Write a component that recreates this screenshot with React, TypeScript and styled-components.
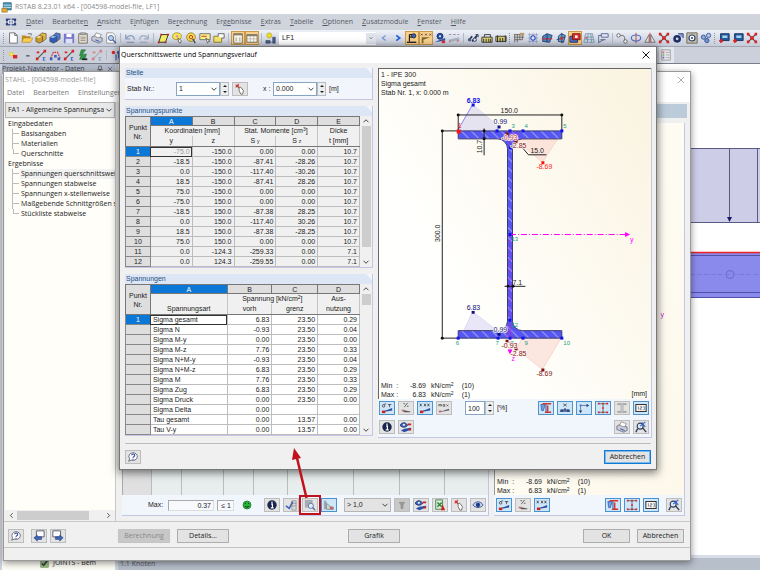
import React from "react";
import styled, { createGlobalStyle, css } from "styled-components";

const sans = `"Liberation Sans", Arial, sans-serif`;
const ui = `"Open Sans", "Noto Sans", sans-serif`;

const Global = createGlobalStyle`
  *, *::before, *::after { box-sizing: border-box; }
  body { margin: 0; font: 7px/10px ${sans}; color: #222; background: #fff; }
  button, select, input { font: inherit; color: inherit; margin: 0; padding: 0; border-radius: 0; }
  svg { display: block; flex: none; }
`;

/* ---------- icons ---------- */

const cube = (a: string, b: string, c: string) => (
  <>
    <path d="M1 6l4-2 4 1v6l-4 2-4-2z" fill={a} stroke="#3a3020" strokeWidth=".6" />
    <path d="M1 6l4-2 4 1-4 2z" fill={b} />
    <path d="M5 4l3-3 5 1v6l-4 3V5z" fill={c} stroke="#3a3020" strokeWidth=".6" />
  </>
);
const beam = (a: string) => (
  <>
    <path d="M2 12L12 2" stroke={a} strokeWidth="1.3" />
    <path d="M9 10h3M10 10v3M9 13h3" stroke="#3d5fc4" fill="none" />
    <path d="M1 10h3v3H1zM10 1h3v3h-3zM2 3h3v2H2z" fill="#d22" />
  </>
);
const slope = <path d="M1 12l4-2 3-1 5-2v3z" fill="#2b50a8" />;
const slopeRed = <path d="M1 10h4v3H1z" fill="#c22" />;
const monitor = (
  <>
    <path d="M3 2h10v8H3z" fill="#245a9c" stroke="#122c55" />
    <path d="M5 4h6v3H5z" fill="#9fd3ee" />
    <path d="M1 10l3-2 2 3-3 2z" fill="#d22" />
  </>
);

const glyphs: Record<string, React.ReactNode> = {
  new: <path d="M3 1h6l3 3v9H3zM9 1v3h3" fill="#fff" stroke="#666" />,
  open: (
    <>
      <path d="M1 4h4l1 1h5v7H1z" fill="#c08a1e" />
      <path d="M3 7h11l-3 5H1z" fill="#f7cf53" stroke="#a0741a" strokeWidth=".5" />
      <path d="M8 2h4v2" stroke="#666" fill="none" />
    </>
  ),
  boxY: cube("#c99a2e", "#f7dc8a", "#e3b548"),
  boxB: cube("#2e5cb8", "#9dbdf2", "#4b7ad4"),
  save: (
    <>
      <path d="M1 2h12v11H1z" fill="#7776c9" />
      <path d="M4 2h6v4H4z" fill="#fff" />
      <path d="M3 8h8v5H3z" fill="#dfe2f4" />
    </>
  ),
  clip: (
    <>
      <path d="M2 2h10v11H2z" fill="#e7dfd0" stroke="#6d6354" />
      <path d="M4 1h6v2H4zM4 6h6M4 8h6M4 10h6" stroke="#777" strokeWidth=".8" fill="#bbb" />
    </>
  ),
  print: (
    <>
      <path d="M1 6l4-2 8 3v4l-4 2-8-3z" fill="#c9ccd8" stroke="#555a70" strokeWidth=".8" />
      <path d="M4 5l2-4 6 2-2 4z" fill="#fff" stroke="#666" strokeWidth=".7" />
      <path d="M5 9l5 2" stroke="#4b62b0" strokeWidth="1.2" />
    </>
  ),
  preview: (
    <>
      <path d="M2 1h7l3 3v9H2z" fill="#fff" stroke="#777" strokeWidth=".8" />
      <circle cx="7" cy="7" r="3" fill="#b8d0f0" stroke="#47639c" />
      <path d="M9 9l4 4" stroke="#47639c" strokeWidth="1.6" />
    </>
  ),
  undo: <path d="M2 3v5h5M2 8c3-5 9-5 10 0v1M3 12h9" fill="none" stroke="#8fa1c0" strokeWidth="1.4" />,
  redo: <path d="M12 3v5H7M12 8C9 3 3 3 2 8v1M2 12h9" fill="none" stroke="#a3b0c4" strokeWidth="1.4" />,
  poly: (
    <>
      <path d="M2 12L5 3h8l-3 9z" fill="#f4ee67" stroke="#222" />
      <path d="M1 11h2v2H1zM4 2h2v2H4zM12 2h2v2h-2zM9 11h2v2H9z" fill="#c22" />
    </>
  ),
  magY: (
    <>
      <ellipse cx="7" cy="5" rx="5" ry="4" fill="#f6e95e" stroke="#a8941c" />
      <circle cx="7" cy="5" r="1.5" fill="#d99" />
      <path d="M8 7l4 3-1 3-2-1z" fill="#fff" stroke="#444" strokeWidth=".8" />
    </>
  ),
  magR: (
    <>
      <circle cx="7" cy="6" r="5" fill="#f3df57" stroke="#96821b" />
      <circle cx="7" cy="6" r="2" fill="none" stroke="#c22" />
      <path d="M9 8l3 5" stroke="#444" strokeWidth="1.4" />
    </>
  ),
  note: (
    <>
      <path d="M1 2h12v7H1z" fill="#f8f08a" stroke="#666" />
      <path d="M3 5h6" stroke="#c22" />
      <path d="M8 7l2 6 1-2 2 0z" fill="#fff" stroke="#333" strokeWidth=".7" />
    </>
  ),
  folderOut: (
    <>
      <path d="M1 5h9v7H1z" fill="#f4e46d" stroke="#8b7a20" />
      <path d="M6 5V2h7v5h-3" fill="#fff" stroke="#555" />
    </>
  ),
  winA: (
    <>
      <path d="M2 2h10v11H2z" fill="#fbfbf4" stroke="#6d6350" />
      <path d="M2 2h10v2H2z" fill="#8b8069" />
      <path d="M4 6h2v5H4zM8 6h2v5H8z" fill="#c9c3b0" />
    </>
  ),
  winB: (
    <>
      <path d="M1 3h12v9H1z" fill="#fbfbf4" stroke="#6d6350" />
      <path d="M1 3h12v2H1z" fill="#8b8069" />
      <path d="M5 5v7M9 5v7M1 8h12" stroke="#aaa08a" strokeWidth=".7" />
    </>
  ),
  lamp: (
    <>
      <circle cx="5" cy="4" r="3" fill="#e9dc31" stroke="#a3982b" strokeWidth=".6" />
      <path d="M1 10h5v3H1zM9 6h3v7H9zM6 12h3" fill="#4c5d85" stroke="#2c3c62" strokeWidth=".6" />
    </>
  ),
  prev: <path d="M9 4L5 7l4 3" fill="none" stroke="#6f98de" strokeWidth="1.4" />,
  next: <path d="M5 4l4 3-4 3" fill="none" stroke="#2065d8" strokeWidth="2" />,
  support: (
    <>
      <path d="M4 3h5M4 6h4M4 3v8" fill="none" stroke="#222" strokeWidth="1.400" />
      <circle cx="9" cy="4.500" r="2.500" fill="#3569c9" stroke="#222" />
      <path d="M1 12h11" stroke="#222" strokeWidth="1.600" />
    </>
  ),
  xxx: (
    <>
      <path d="M1 2l2 2M3 2L1 4M6 2l2 2M8 2L6 4M11 2l2 2M13 2l-2 2" stroke="#333" strokeWidth=".9" />
      <path d="M2 6h10L4 9v4H2z" fill="#7a6a35" />
    </>
  ),
  eyeBeam: (
    <>
      <circle cx="7" cy="5" r="3.500" fill="#2c4fae" stroke="#1a2d62" />
      <circle cx="7" cy="5" r="1.200" fill="#dff" />
      {slope}
      <path d="M9 10h4v3H9z" fill="#d33" />
    </>
  ),
  xxxGrey: (
    <>
      <path d="M1 3h3M6 3h3M11 3h2" stroke="#99a" strokeWidth="1.2" />
      <path d="M1 9l12-3v3L2 12z" fill="#a9b2c6" />
      <path d="M10 9h3v2h-3zM1 10h2v2H1z" fill="#c88" />
    </>
  ),
  fastener: (
    <>
      <path d="M2 10l4-5M6 11l6-7" stroke="#27344f" strokeWidth="2" />
      <circle cx="3" cy="9" r="2" fill="#46608f" />
      <circle cx="9" cy="9" r="2" fill="#e5e5ef" stroke="#27344f" />
      <path d="M10 3h3v3" fill="none" stroke="#27344f" />
    </>
  ),
  rig: (
    <>
      <path d="M1 6h12v6H1z" fill="#d9cf72" stroke="#333" />
      <path d="M4 6V3h7v3M3 12V8M6 12V8M9 12V8M11 12V8" stroke="#333" fill="none" />
    </>
  ),
  track: (
    <>
      <path d="M1 5h12v6H1z" fill="#d9cf72" stroke="#333" />
      <path d="M3 12V4M6 12V7M9 12V7M12 12V4" stroke="#333" strokeWidth="1.2" />
    </>
  ),
  gridA: (
    <>
      <path d="M1 3h12M1 6h12M2 9h9M2 3v9M5 3v9M8 3v6M11 3v6" stroke="#675f58" />
      <path d="M8 1h5v3H8z" fill="#b99a72" />
    </>
  ),
  gridB: (
    <>
      <path d="M1 3h12M1 7h12M1 11h12M3 1v12M7 1v12M11 1v12" stroke="#8a98c4" strokeWidth=".8" />
      <circle cx="7" cy="7" r="2.500" fill="#dfe8ff" stroke="#2a49b6" strokeWidth="1.2" />
    </>
  ),
  plane: (
    <>
      <path d="M2 5l5-3 6 2-3 8-8-1z" fill="#4d86c4" stroke="#1f3c66" />
      <path d="M1 8h12" stroke="#c33" strokeWidth="1.4" />
      <path d="M7 2v10" stroke="#1f3c66" />
    </>
  ),
  plane2: (
    <>
      <path d="M4 5l3-3 5 2-2 8-6-1z" fill="#6fa3cf" stroke="#1f3c66" />
      <path d="M8 1v12M2 9l10-3" stroke="#1f3c66" />
      <path d="M6 6h3v3H6z" fill="#c33" />
    </>
  ),
  snap: (
    <>
      <path d="M1 5h9v7H1z" fill="#4d74c4" stroke="#1f2f66" />
      <path d="M4 2h9v7H4z" fill="#d33" stroke="#711" />
      <path d="M7 4h3v3H7z" fill="#fff" />
    </>
  ),
  mesh: (
    <>
      <path d="M3 2h8l2 10H1zM2 6h10M2 9h11M6 2L5 12M9 2l1 10" fill="#cfe0ea" stroke="#738da6" strokeWidth=".9" />
      <path d="M3 6h2v2H3z" fill="#c55" />
    </>
  ),
  guide: <path d="M2 13V4h3M5 2h8v4H5zM4 9h6M2 12l6-3" fill="#e3e8f4" stroke="#4c5c88" />,
  nodes: (
    <>
      <circle cx="3" cy="4" r="2" fill="#fff" stroke="#555" />
      <circle cx="11" cy="11" r="2" fill="#fff" stroke="#555" />
      <path d="M5 4c5 0 5 1 5 5" fill="none" stroke="#555" />
    </>
  ),
  rotate: (
    <>
      <ellipse cx="7" cy="7" rx="5.500" ry="3.500" fill="none" stroke="#4b74c8" strokeWidth="1.4" />
      <path d="M7 1v12" stroke="#c33" />
    </>
  ),
  mirror: (
    <>
      <path d="M6 3v9H1zM8 3v9h5z" fill="#e1e1e6" stroke="#555" strokeWidth=".8" />
      <path d="M7 1v12" stroke="#c33" />
    </>
  ),
  cross: (
    <>
      <path d="M2 2l10 10M12 2L2 12" stroke="#333" strokeWidth="1.2" />
      <path d="M1 1h3v3H1zM10 1h3v3h-3zM1 10h3v3H1zM10 10h3v3h-3zM5 5h4v4H5z" fill="#d22" />
    </>
  ),
  sphere: (
    <>
      <path d="M7 2h6v5" fill="#7f9bd6" stroke="#2c3c72" />
      <circle cx="6" cy="8" r="4.500" fill="#1d2d63" />
      <circle cx="6" cy="8" r="1.600" fill="#cfd9f4" />
    </>
  ),
  frame: (
    <>
      <path d="M1 1h12v12H1z" fill="#c6c1ad" stroke="#665f4c" />
      <circle cx="7" cy="7" r="3.500" fill="#fff" stroke="#2c3f75" strokeWidth="1.400" />
      <circle cx="7" cy="7" r="1.200" fill="#2c3f75" />
    </>
  ),
  balls: (
    <>
      <circle cx="4" cy="6" r="2.500" fill="#8fa9dd" stroke="#33508f" />
      <circle cx="10" cy="4" r="2.500" fill="#b3c6ec" stroke="#33508f" />
      <circle cx="8" cy="10" r="2.500" fill="#6f8fd0" stroke="#33508f" />
    </>
  ),
  monitor,
  node: (
    <>
      <circle cx="5" cy="6" r="2.500" fill="#e8cf2a" />
      <circle cx="5" cy="6" r="1" fill="#fff8b0" />
      <path d="M7 7h5v4H7z" fill="#d22" />
    </>
  ),
  dash: <path d="M6 8h4" stroke="#444" strokeWidth="1.400" />,
  member: beam("#555"),
  members: (
    <>
      <path d="M2 11l3-7h5l3 7" fill="none" stroke="#c33" strokeWidth="1.400" strokeDasharray="2 1" />
      <path d="M1 10h3v3H1zM10 10h3v3h-3zM6 7h3v3H6z" fill="#3a5dc0" />
    </>
  ),
  green: (
    <>
      <path d="M5 1h5L6 6h5l-2 6H3l2-4H3z" fill="#2f9a49" stroke="#165a28" strokeWidth=".6" />
      <path d="M6 11h6v2H6z" fill="#222" />
    </>
  ),
  faded: <g opacity=".45">{beam("#888")}</g>,
  load: (
    <>
      <circle cx="4" cy="4" r="2" fill="#d22" />
      <circle cx="10" cy="4" r="2" fill="#3a5dc0" />
      <path d="M7 6v7M10 6v5" stroke="#3a5dc0" strokeWidth="1.400" />
    </>
  ),
  table: (
    <>
      <path d="M2 1h10v12H2z" fill="#e8e8ec" stroke="#999" />
      <path d="M3 3h2v2H3z" fill="#d66" />
      <path d="M3 6h2v2H3z" fill="#6c6" />
      <path d="M3 9h2v2H3z" fill="#66c" />
      <path d="M7 4h4M7 7h4M7 10h4" stroke="#aaa" />
    </>
  ),
  app: (
    <>
      <path d="M3 1h10v9H3z" fill="#4a97b8" stroke="#1e5c7c" />
      <path d="M3 4h10M3 7h10" stroke="#d8eef5" />
      <path d="M1 8h7v5H1z" fill="#e6ab2f" stroke="#6c5b38" strokeWidth=".6" />
    </>
  ),
  dock: (
    <>
      <path d="M1 3h12v8H1z" fill="#2d3f7a" />
      <path d="M0 7h14M7 2v10M4 5h6v4H4z" stroke="#fff" fill="none" />
    </>
  ),
  pick: (
    <>
      <path d="M2 2l4 4M2 5l3-3M5 1v3" stroke="#c33" strokeWidth="1.2" />
      <path d="M6 5l2 0 3 4-1 4H8L6 9z" fill="#fff" stroke="#555" strokeWidth=".9" />
    </>
  ),
  help: (
    <>
      <path d="M7 2a5 4.500 0 1 1-2 8.600L2 12l1-3A5 4.500 0 0 1 7 2z" fill="#fff" stroke="#5a5f6e" />
      <path d="M5.500 5c0-2 3.500-2 3.500 0S7 6.500 7 8M7 9v1.300" fill="none" stroke="#27479c" strokeWidth="1.300" />
    </>
  ),
  info: (
    <>
      <circle cx="7" cy="7" r="5.500" fill="#18254e" />
      <path d="M7 3v2M6 6h1.500v4M5.500 10.300h3.500" stroke="#fff" strokeWidth="1.400" fill="none" />
    </>
  ),
  eyeRed: (
    <>
      <path d="M0 5c3-4 6-4 9 0-3 3-6 3-9 0z" fill="#3c66c4" stroke="#14265a" />
      <circle cx="4.500" cy="4.500" r="1.300" fill="#eef" />
      <path d="M1 11l4-2 8-1v2l-8 3z" fill="#2b50a8" />
      <path d="M9 3h4v2H9zM10 9h3v2h-3z" fill="#c22" />
    </>
  ),
  sigma: (
    <>
      <path d="M3 3c-2 0-2 3 0 3s2-2 0-3l3-1M8 3h4M10 3v3" fill="none" stroke="#444" />
      {slope}
      {slopeRed}
    </>
  ),
  percent: (
    <>
      <path d="M5 6l4-5M4 2h2M8 5h2" stroke="#555" />
      <path d="M2 9l10 2v1H5z" fill="#555" />
      <path d="M2 9h3v2H2z" fill="#b77" />
    </>
  ),
  values: (
    <>
      <path d="M1 2l2 3M3 2L1 5M6 2l2 3M8 2L6 5M10 2l2 3M12 2l-2 3" stroke="#333" strokeWidth=".9" />
      {slope}
      {slopeRed}
    </>
  ),
  max: (
    <>
      <path d="M1 5V3h3v2M6 3h2v2H6zM10 3l2 2M12 3l-2 2M2.500 3v2" stroke="#555" fill="none" strokeWidth=".9" />
      <path d="M1 12l8-3 4-1v2z" fill="#667" />
      <path d="M1 10h3v2H1z" fill="#a66" />
    </>
  ),
  section: (
    <>
      <path d="M1 3h5l-2 7H2z" fill="#6ea2e6" stroke="#1b3d8f" strokeWidth=".7" />
      <path d="M3 2h10M6 12h7M9 4v7" stroke="#d2332c" strokeWidth="1.600" />
      <path d="M7 3v8l-1 1" fill="none" stroke="#1b3d8f" />
    </>
  ),
  dim: (
    <>
      <path d="M5 2l4 3M9 2L5 5" stroke="#555" />
      <path d="M1 11h12M2 9h3v2H2zM9 9h3v2H9zM6 8h2v2H6z" fill="#2e4a83" stroke="#2e4a83" strokeWidth=".8" />
    </>
  ),
  axes: (
    <>
      <path d="M3 12V4h9" fill="none" stroke="#5a74a0" />
      <path d="M10 2l3 2-3 2zM1 10l2 3 2-3z" fill="#2d4470" />
      <path d="M2 3h2v2H2z" fill="#356ad0" />
    </>
  ),
  points: (
    <>
      <path d="M2 2h10M2 12h10M7 2v10" stroke="#5a6072" />
      <path d="M1 1h2v2H1zM11 1h2v2h-2zM1 11h2v2H1zM11 11h2v2h-2zM6 1h2v2H6zM6 6h2v2H6zM6 11h2v2H6z" fill="#d3271f" />
    </>
  ),
  outline: <path d="M2 2h10v1H8v8h4v1H2v-1h4V3H2z" fill="#eee" stroke="#888" strokeWidth=".8" />,
  number: (
    <>
      <path d="M1 3h12v8H1z" fill="#f7f7f7" stroke="#333" strokeWidth="1.200" />
      <path d="M4 5v4M6 5.500h2v1.500H6V9h2M9.500 5.500h1.500V9H9.500" fill="none" stroke="#555" strokeWidth=".7" />
    </>
  ),
  zoomX: (
    <>
      <circle cx="6" cy="6" r="3.500" fill="#dcebf9" stroke="#333d55" strokeWidth="1.300" />
      <path d="M3 9l-2 4M9 8l4 5" stroke="#333d55" strokeWidth="1.600" />
      <path d="M6 6l6-5M8 2l4 5" stroke="#2f62c8" strokeWidth="1.400" />
    </>
  ),
  levels: (
    <>
      <path d="M8 2h5v11H8zM8 5h5M8 8h5" fill="#d8d8d8" stroke="#888" strokeWidth=".8" />
      <path d="M1 8l4 3 4-8" fill="none" stroke="#3b62b5" strokeWidth="1.800" />
    </>
  ),
  find: (
    <>
      <path d="M1 1h9v9H1z" fill="#a9abb2" />
      <circle cx="8" cy="8" r="3" fill="#e1ecfb" stroke="#536da6" />
      <path d="M10 10l3 3" stroke="#536da6" strokeWidth="1.600" />
    </>
  ),
  diagram: (
    <>
      <path d="M1 2h3v10H1z" fill="#9aa" />
      <path d="M4 5l5 4 3 1v2H4z" fill="#c9d6d0" stroke="#667" strokeWidth=".7" />
      <path d="M8 9h4v3H8z" fill="#b66" />
    </>
  ),
  filter: <path d="M4 4h6L8 7v4H6V7z" fill="#999" stroke="#8d8d8d" />,
  excel: (
    <>
      <path d="M2 1h8v11H2z" fill="#d8ead8" stroke="#3d7f45" />
      <path d="M4 4l5 5M9 4L4 9" stroke="#278234" strokeWidth="1.600" />
      <path d="M10 6l3 7H8z" fill="#c22" />
    </>
  ),
  eye: (
    <>
      <path d="M1 7c3-5 9-5 12 0-3 4-9 4-12 0z" fill="#bcd0f2" stroke="#3b5390" />
      <circle cx="7" cy="7" r="2.500" fill="#1e3c86" />
    </>
  ),
  back: (
    <>
      <path d="M4 1h9v7H4z" fill="#fff" stroke="#4a5068" />
      <path d="M1 9l4-3v2h5v3H5v2z" fill="#3f67bb" stroke="#1e3670" strokeWidth=".6" />
    </>
  ),
  forth: (
    <>
      <path d="M1 1h9v7H1z" fill="#fff" stroke="#4a5068" />
      <path d="M13 9L9 6v2H4v3h5v2z" fill="#3f67bb" stroke="#1e3670" strokeWidth=".6" />
    </>
  ),
  close: <path d="M4 4l6 6M10 4l-6 6" stroke="currentColor" strokeWidth=".8" />,
  pin: <path d="M5 3h4v5H5zM3 8h8M7 8v4" fill="none" stroke="#555" />,
};

const Svg = ({ name, size = 14 }: { name: string; size?: number }) => (
  <svg width={size} height={size} viewBox="0 0 14 14" aria-hidden="true">
    {glyphs[name]}
  </svg>
);

const Chevron = ({ dir = "down", w = 8 }: { dir?: "down" | "up" | "left" | "right"; w?: number }) => {
  const d = { down: "M2 3l2 2 2-2", up: "M2 5l2-2 2 2", left: "M5 2L3 4l2 2", right: "M3 2l2 2-2 2" }[dir];
  return (
    <svg width={w} height={w} viewBox="0 0 8 8" aria-hidden="true">
      <path d={d} fill="none" stroke="#444" strokeWidth=".8" />
    </svg>
  );
};

/* ---------- main window ---------- */

const Desktop = styled.div`
  position: relative;
  display: flex;
  flex-direction: column;
  height: 100vh;
  min-height: 540px;
  overflow: hidden;
  background: #fff;
`;
const AppTitle = styled.header`
  display: flex;
  align-items: center;
  gap: 3px;
  height: 14px;
  padding-left: 1px;
  font: 7px/14px ${ui};
  color: #8a8a8a;
`;
const AppMenu = styled.nav`
  display: flex;
  align-items: center;
  gap: 9px;
  height: 16px;
  padding-left: 5px;
  background: #d0d4dd;
  font: 7px/16px ${ui};
  color: #555a66;
`;
const MenuLink = styled.button`
  border: 0;
  background: none;
  font: 7px/12px ${ui};
  color: inherit;
`;
const Toolbar = styled.div`
  display: flex;
  align-items: center;
  height: 17px;
  padding-left: 2px;
  overflow: hidden;
  background: linear-gradient(#eef1f7, #d4d9e5 60%, #c6ccd9);
  border-bottom: 1px solid #a0a5b0;
`;
const Tool = styled.button<{ $on?: boolean }>`
  display: flex;
  flex: none;
  align-items: center;
  justify-content: center;
  width: 14px;
  height: 14px;
  border: 1px solid ${(p) => (p.$on ? "#c89a4a" : "transparent")};
  background: ${(p) => (p.$on ? "#fbd08c" : "transparent")};
`;
const Grip = styled.span`
  flex: none;
  width: 2px;
  height: 11px;
  margin: 0 1px;
  border-left: 1px dotted #8d94a4;
`;
const Sep = styled.span`
  flex: none;
  width: 1px;
  height: 10px;
  margin: 0 2px;
  background: #b3b9c7;
`;
const CaseBox = styled.label`
  display: flex;
  flex: none;
  align-items: center;
  width: 97px;
  height: 13px;
  margin: 0 1px;
  background: #fff;
`;
const CaseSelect = styled.select`
  flex: 1;
  height: 13px;
  padding-left: 3px;
  border: 0;
  background: transparent;
  appearance: none;
`;
const DropMark = styled.span`
  display: flex;
  align-items: center;
  justify-content: center;
  width: 10px;
  height: 11px;
  background: #dfe3ec;
`;
const Strip = styled.div`
  display: flex;
  height: 17px;
  background: #cbd0da;
  border-bottom: 1px solid #777d89;
`;
const StripTools = styled.div`
  display: flex;
  align-items: center;
  padding-left: 2px;
  width: 118px;
`;
const StripEnd = styled.div`
  display: flex;
  align-items: center;
  margin: 0 86px 0 auto;
  padding-right: 1px;
  background: #e2e6ee;
`;
const Work = styled.div`
  display: flex;
  flex: 1;
  min-height: 0;
  background: #cfd5e0;
  gap: 3px;
  padding-left: 2px;
`;
const Navigator = styled.aside`
  display: flex;
  flex-direction: column;
  justify-content: space-between;
  width: 113px;
  background: #fffef6;
`;
const NavTitle = styled.div`
  display: flex;
  align-items: center;
  height: 10px;
  background: #b4bccb;
  font: 7px/10px ${ui};
  color: #3c4350;
  white-space: nowrap;
  & > span { flex: 1; }
`;
const NavItem = styled.label`
  display: flex;
  align-items: center;
  gap: 4px;
  height: 14px;
  padding-left: 38px;
  font: 7px/14px ${ui};
`;
const Tick = styled.input`
  width: 9px;
  height: 9px;
  accent-color: #9bbf8a;
`;
const ViewColumn = styled.div`
  display: flex;
  flex: 1;
  flex-direction: column;
  min-width: 0;
`;
const Viewport = styled.div`
  display: flex;
  flex: 1;
  justify-content: flex-end;
  padding-top: 80px;
  background: #fff;
`;
const TableTitle = styled.div`
  height: 15px;
  border-top: 3px solid #d8dde8;
  padding-left: 2px;
  background: #b7bfcb;
  font: 7px/12px ${ui};
  color: #555c68;
`;

/* ---------- windows ---------- */

const shadow = "0 2px 7px rgba(0, 0, 0, 0.45)";

const Module = styled.section`
  position: absolute;
  inset: 71px 69px 9px 3px;
  display: flex;
  flex-direction: column;
  border: 1px solid #9a9a9a;
  background: #f0f0f0;
  box-shadow: ${shadow};
`;
const ModuleTitle = styled.div`
  display: flex;
  align-items: center;
  justify-content: space-between;
  height: 15px;
  padding: 0 2px 0 1px;
  background: #fff;
  color: #999;
  font: 7px/15px ${ui};
`;
const ModuleMenu = styled.nav`
  display: flex;
  align-items: flex-start;
  gap: 9px;
  height: 15px;
  padding-left: 3px;
  background: #fff;
  color: #777;
`;
const ModuleBody = styled.div`
  display: flex;
  flex: 1;
  min-height: 0;
  gap: 4px;
  padding: 0 2px 0 1px;
  border-bottom: 1px solid #c8c8c8;
`;
const Side = styled.div`
  display: flex;
  flex-direction: column;
  width: 111px;
  border-right: 1px solid #c8c8c8;
`;
const SideCombo = styled.label`
  display: flex;
  align-items: center;
  height: 16px;
  margin-bottom: 1px;
  border: 1px solid #b5b5b5;
  background: #e9e9e9;
  font: 7px/12px ${ui};
`;
const PlainSelect = styled.select`
  flex: 1;
  min-width: 0;
  height: 100%;
  padding-left: 2px;
  border: 0;
  background: transparent;
  appearance: none;
`;
const TreeRoot = styled.ul`
  flex: 1;
  margin: 0;
  padding: 0 0 0 3px;
  overflow: hidden;
  list-style: none;
  background: #fffef8;
  color: #222;
  font: 7px/10px ${ui};
  white-space: nowrap;
`;
const TreeBranch = styled.ul`
  margin: 0 0 0 4px;
  padding: 0;
  list-style: none;
`;
const TreeLeaf = styled.li<{ $on?: boolean }>`
  display: flex;
  height: 10px;
  border-left: 1px solid #bbb;
  &::before { content: ""; flex: none; width: 6px; height: 5px; margin-right: 1px; border-bottom: 1px solid #bbb; }
  &:last-child { border-color: transparent; }
  &:last-child::before { border-left: 1px solid #bbb; }
  & > span { padding: 0 1px; background: ${(p) => (p.$on ? "#f1f1f1" : "none")}; }
`;
const HScroll = styled.div`
  display: flex;
  align-items: center;
  gap: 1px;
  height: 11px;
  padding: 0 2px 1px;
  background: #f0f0f0;
  & > i { width: 72px; height: 9px; background: #cdcdcd; }
  & > svg:last-child { margin-left: auto; }
`;
const ModuleMain = styled.div`
  display: flex;
  flex: 1;
  flex-direction: column;
  min-width: 0;
  padding-right: 1px;
`;
const BlueBar = styled.div`
  height: 14px;
  margin: 2px 0 5px;
  background: #bccbda;
`;
const Panes = styled.div`
  display: flex;
  flex: 1;
  gap: 5px;
  padding: 0 2px 5px 2px;
`;
const Pane = styled.div<{ $w?: number }>`
  display: flex;
  flex-direction: column;
  ${(p) => (p.$w ? css`width: ${p.$w}px;` : css`flex: 1;`)}
  border: solid #c5c6e6;
  border-width: 0 1px 1px 0;
  background: #f1f5fc;
`;
const Columns = styled.div`
  display: flex;
  flex: 1;
  border-left: 1px solid #aaa;
  background: #e8eeee;
`;
const Column = styled.div<{ $w: number; $head?: boolean }>`
  width: ${(p) => p.$w}px;
  border-right: 1px solid #b9bdbd;
  background: ${(p) => (p.$head ? "#e0e0e0" : "none")};
`;
const Sheet = styled.div`
  display: flex;
  flex: 1;
  flex-direction: column;
  justify-content: space-between;
  border-left: 1px solid #999;
  background: linear-gradient(120deg, #fffffb, #fdf8ea);
`;
const AxisName = styled.div`
  padding: 187px 20px 0 0;
  color: #c2c;
  text-align: right;
`;
const PaneTools = styled.div`
  display: flex;
  align-items: center;
  gap: 3px;
  height: 20px;
  padding: 0 2px;
`;
const Spread = styled.span<{ $w?: number }>`
  ${(p) => (p.$w ? css`width: ${p.$w}px;` : css`flex: 1;`)}
`;
const IconButton = styled.button<{ $on?: boolean; $marked?: boolean }>`
  display: flex;
  flex: none;
  align-items: center;
  justify-content: center;
  width: 16px;
  height: 14px;
  border: 1px solid ${(p) => (p.$on ? "#4a93cf" : "#bdbdbd")};
  background: ${(p) => (p.$on ? "#cfe6f8" : "#e3e3e3")};
  ${(p) => p.$marked && css`outline: 2px solid #c1121b; outline-offset: 1px;`}
  &:disabled { background: #c8c8c8; }
`;
const Field = styled.input<{ $w: number }>`
  width: ${(p) => p.$w}px;
  height: 11px;
  padding: 0 2px;
  border: 1px solid #a9a9a9;
  border-right-color: #ddd;
  border-bottom-color: #ddd;
  background: #f7f9fd;
  text-align: right;
`;
const Combo = styled.label<{ $w: number; $grey?: boolean }>`
  display: flex;
  flex: none;
  align-items: center;
  width: ${(p) => p.$w}px;
  height: 14px;
  border: 1px solid ${(p) => (p.$grey ? "#b5b5b5" : "#86a4c4")};
  background: ${(p) => (p.$grey ? "#e3e3e3" : "#fff")};
`;
const Joined = styled.span`
  display: flex;
  flex: none;
`;
const ModuleFoot = styled.footer`
  display: flex;
  align-items: center;
  gap: 3px;
  height: 26px;
  padding: 2px 6px 0 4px;
  border-bottom: 1px solid #c4c4c4;
`;
const StatusLine = styled.div`
  height: 12px;
`;
const TextButton = styled.button<{ $w: number; $primary?: boolean }>`
  flex: none;
  width: ${(p) => p.$w}px;
  height: 14px;
  border: ${(p) => (p.$primary ? "1px solid #0f7bd7" : "1px solid #adadad")};
  background: #e3e3e3;
  box-shadow: ${(p) => (p.$primary ? "inset 0 0 0 1px #7db8e8" : "none")};
  font: 7px/9px ${ui};
  &:disabled { border-color: #c4c4c4; background: #c8c8c8; color: #888; }
`;

/* ---------- dialog ---------- */

const Dialog = styled.section`
  position: absolute;
  inset: 46px 103px auto 119px;
  display: flex;
  flex-direction: column;
  border: 1px solid #777;
  background: #f0f0f0;
  box-shadow: 0 2px 8px 1px rgba(0, 0, 0, 0.5);
`;
const DialogTitle = styled.h1`
  display: flex;
  align-items: center;
  justify-content: space-between;
  height: 16px;
  margin: 0;
  padding: 0 2px 0 1px;
  background: #fff;
  color: #000;
  font: 7px/16px ${ui};
`;
const CloseButton = styled.button`
  border: 0;
  background: none;
`;
const DialogBody = styled.div`
  display: flex;
  gap: 5px;
  padding: 5px 4px;
`;
const Groups = styled.div`
  display: flex;
  flex: none;
  flex-direction: column;
  gap: 6px;
  width: 248px;
  margin-left: 1px;
`;
const Group = styled.fieldset`
  min-width: 0;
  margin: 0;
  padding: 0;
  border: solid #c5c6e6;
  border-width: 0 1px 1px 0;
  background: #f2f5fb;
`;
const GroupName = styled.div`
  height: 10px;
  padding-left: 1px;
  background: #dce6f4;
  clip-path: polygon(0 0, calc(100% - 6px) 0, 100% 6px, 100% 100%, 0 100%);
  color: #1f4e86;
`;
const Place = styled.div`
  display: flex;
  align-items: center;
  height: 21px;
  padding-left: 2px;
`;
const Caption = styled.label<{ $w?: number }>`
  width: ${(p) => (p.$w ? `${p.$w}px` : "auto")};
  flex: none;
`;
const Spin = styled.span`
  display: flex;
  flex: none;
  flex-direction: column;
  width: 9px;
  height: 14px;
  border: 1px solid #b4bcc8;
  background: #eee;
`;
const SpinButton = styled.button`
  display: flex;
  flex: 1;
  align-items: center;
  justify-content: center;
  min-height: 0;
  border: 0;
  background: none;
`;
const GridRow = styled.div`
  display: flex;
  align-items: stretch;
`;
const DataTable = styled.table`
  flex: 1;
  border-collapse: collapse;
  table-layout: fixed;
  font: 7px/9px ${sans};
`;
const HeadCell = styled.th<{ $on?: boolean; $letter?: boolean; $grey?: boolean; $edge?: "top" | "bottom" }>`
  height: ${(p) => (p.$letter ? 9 : p.$edge === "bottom" ? 11 : 10)}px;
  padding: 0;
  border: 1px solid ${(p) => (p.$letter || p.$grey ? "#777" : "#c4c4c4")};
  ${(p) => p.$edge === "top" && css`border-bottom: 0;`}
  ${(p) => p.$edge === "bottom" && css`border-top: 0; border-bottom-color: #777;`}
  background: ${(p) => (p.$on ? "#0b78d7" : p.$letter || p.$grey ? "#dedede" : "#f0f0f0")};
  color: ${(p) => (p.$on ? "#fff" : "#222")};
  font-weight: 400;
  line-height: ${(p) => (p.$letter ? 7 : 9)}px;
`;
const RowHead = styled.th<{ $on?: boolean }>`
  height: 10px;
  padding: 0;
  border: 1px solid #888;
  background: ${(p) => (p.$on ? "#0b78d7" : "#dedede")};
  color: ${(p) => (p.$on ? "#fff" : "#222")};
  font-weight: 400;
  line-height: 9px;
`;
const Cell = styled.td<{ $text?: boolean; $white?: boolean; $focus?: boolean; $dim?: boolean }>`
  height: 10px;
  padding: 0 2px;
  border: 1px solid #bdbdbd;
  background: ${(p) => (p.$white ? "#fff" : "#f0f0f0")};
  color: ${(p) => (p.$dim ? "#999" : "#222")};
  text-align: ${(p) => (p.$text ? "left" : "right")};
  line-height: 9px;
  ${(p) => p.$focus && css`outline: 1px solid #333; outline-offset: -1px;`}
`;
const Small = styled.span`
  font-size: 5px;
  line-height: 0;
`;
const Raised = styled(Small)`
  vertical-align: 2px;
`;
const VScroll = styled.div<{ $thumb: number }>`
  display: flex;
  flex-direction: column;
  align-items: center;
  justify-content: space-between;
  width: 12px;
  background: #f0f0f0;
  &::before { content: ""; order: 1; width: 9px; height: ${(p) => p.$thumb}px; background: #cdcdcd; }
  & > svg:last-child { order: 2; margin-top: auto; }
`;
const Picture = styled.div`
  display: flex;
  flex: 1;
  flex-direction: column;
  min-width: 0;
  border: solid #c5c6e6;
  border-width: 0 1px 1px 0;
  background: #f1f5fc;
`;
const Paper = styled.div`
  display: flex;
  flex: 1;
  flex-direction: column;
  border: solid #666;
  border-width: 1px 0 0 1px;
  background: linear-gradient(60deg, #fffffd 30%, #faf3df);
  color: #222;
`;
const PaperHead = styled.p`
  margin: 0;
  padding: 1px 2px 0;
  line-height: 9px;
`;
const Limits = styled.div`
  display: flex;
  align-items: flex-end;
  justify-content: space-between;
  padding: 0 4px 0 2px;
`;
const LimitTable = styled.table`
  border-collapse: collapse;
  line-height: 9px;
  & th { width: 20px; padding: 0; font-weight: 400; text-align: left; }
  & td { padding: 0 8px 0 0; }
  & td:nth-child(2) { width: 30px; padding-right: 5px; text-align: right; }
`;
const PictureTools = styled.div`
  display: flex;
  align-items: center;
  gap: 3px;
  padding: 2px 2px 3px 1px;
`;
const DialogFoot = styled.footer`
  display: flex;
  align-items: center;
  justify-content: space-between;
  height: 26px;
  margin: 0 5px;
  border-top: 1px solid #bcbcbc;
`;
const Pointer = styled.svg`
  position: absolute;
  left: 284px;
  top: 447px;
`;

/* ---------- data ---------- */

const tools: string[] = (
  "# new open boxY boxB save clip print preview | undo redo | poly magY magR note folderOut | *winA *winB | lamp"
).split(" ");
const toolsRight: string[] = (
  "prev next *support *xxx eyeBeam xxxGrey | fastener rig track # gridA gridB plane plane2 *snap mesh guide | nodes rotate mirror cross sphere frame balls # monitor monitor cross"
).split(" ");

const points = [
  ["-75.0", "-150.0", "0.00", "0.00", "10.7"],
  ["-18.5", "-150.0", "-87.41", "-28.26", "10.7"],
  ["0.0", "-150.0", "-117.40", "-30.26", "10.7"],
  ["18.5", "-150.0", "-87.41", "28.26", "10.7"],
  ["75.0", "-150.0", "0.00", "0.00", "10.7"],
  ["-75.0", "150.0", "0.00", "0.00", "10.7"],
  ["-18.5", "150.0", "-87.38", "28.25", "10.7"],
  ["0.0", "150.0", "-117.40", "30.26", "10.7"],
  ["18.5", "150.0", "-87.38", "-28.25", "10.7"],
  ["75.0", "150.0", "0.00", "0.00", "10.7"],
  ["0.0", "-124.3", "-259.33", "0.00", "7.1"],
  ["0.0", "124.3", "-259.55", "0.00", "7.1"],
];
const stresses = [
  ["Sigma gesamt", "6.83", "23.50", "0.29"],
  ["Sigma N", "-0.93", "23.50", "0.04"],
  ["Sigma M-y", "0.00", "23.50", "0.00"],
  ["Sigma M-z", "7.76", "23.50", "0.33"],
  ["Sigma N+M-y", "-0.93", "23.50", "0.04"],
  ["Sigma N+M-z", "6.83", "23.50", "0.29"],
  ["Sigma M", "7.76", "23.50", "0.33"],
  ["Sigma Zug", "6.83", "23.50", "0.29"],
  ["Sigma Druck", "0.00", "23.50", "0.00"],
  ["Sigma Delta", "0.00", "", ""],
  ["Tau gesamt", "0.00", "13.57", "0.00"],
  ["Tau V-y", "0.00", "13.57", "0.00"],
];

/* ---------- parts ---------- */

const ToolItems = ({ items }: { items: string[] }) => (
  <>
    {items.map((t, i) => {
      if (t === "|") return <Sep key={i} />;
      if (t === "#") return <Grip key={i} />;
      const on = t[0] === "*";
      const name = on ? t.slice(1) : t;
      return (
        <Tool key={i} $on={on} aria-label={name}>
          <Svg name={name} size={12} />
        </Tool>
      );
    })}
  </>
);

const Icon = ({ name, on, marked, disabled }: { name: string; on?: boolean; marked?: boolean; disabled?: boolean }) => (
  <IconButton $on={on} $marked={marked} disabled={disabled} aria-label={name}>
    <Svg name={name} size={12} />
  </IconButton>
);

const Spinner = () => (
  <Spin>
    {["M1 3l2-2 2 2z", "M1 1l2 2 2-2z"].map((d, i) => (
      <SpinButton key={d} aria-label={i ? "Weniger" : "Mehr"}>
        <svg width="6" height="4" viewBox="0 0 6 4">
          <path d={d} fill="#222" />
        </svg>
      </SpinButton>
    ))}
  </Spin>
);

const MenuItems = ({ items }: { items: [string, number][] }) => (
  <>
    {items.map(([label, at]) => (
      <MenuLink key={label}>
        {at < 0 ? label : <>{label.slice(0, at)}<u>{label[at]}</u>{label.slice(at + 1)}</>}
      </MenuLink>
    ))}
  </>
);

const LimitRows = () => (
  <LimitTable>
    <tbody>
      <tr><th>Min&nbsp; :</th><td>-8.69</td><td>kN/cm<Raised>2</Raised></td><td>(10)</td></tr>
      <tr><th>Max :</th><td>6.83</td><td>kN/cm<Raised>2</Raised></td><td>(1)</td></tr>
    </tbody>
  </LimitTable>
);
const LimitBlock = styled.div`
  padding: 0 2px;
`;

const PointTable = () => (
  <GridRow>
    <DataTable>
      <colgroup>
        <col width="25" /><col width="42" /><col width="42" /><col width="42" /><col width="42" /><col width="42" />
      </colgroup>
      <thead>
        <tr>
          <HeadCell $grey rowSpan={3}>Punkt<br />Nr.</HeadCell>
          {["A", "B", "C", "D", "E"].map((l) => <HeadCell key={l} $letter $on={l === "A"}>{l}</HeadCell>)}
        </tr>
        <tr>
          <HeadCell colSpan={2} $edge="top">Koordinaten [mm]</HeadCell>
          <HeadCell colSpan={2} $edge="top">Stat. Momente [cm<Raised>3</Raised>]</HeadCell>
          <HeadCell $edge="top">Dicke</HeadCell>
        </tr>
        <tr>
          <HeadCell $edge="bottom">y</HeadCell>
          <HeadCell $edge="bottom">z</HeadCell>
          <HeadCell $edge="bottom">S <Small>y</Small></HeadCell>
          <HeadCell $edge="bottom">S <Small>z</Small></HeadCell>
          <HeadCell $edge="bottom">t [mm]</HeadCell>
        </tr>
      </thead>
      <tbody>
        {points.map((row, i) => (
          <tr key={i}>
            <RowHead $on={i === 0}>{i + 1}</RowHead>
            {row.map((v, j) => <Cell key={j} $focus={!i && !j} $dim={!i && !j}>{v}</Cell>)}
          </tr>
        ))}
      </tbody>
    </DataTable>
    <VScroll $thumb={121}><Chevron dir="up" w={10} /><Chevron w={10} /></VScroll>
  </GridRow>
);

const StressTable = () => (
  <GridRow>
    <DataTable>
      <colgroup>
        <col width="25" /><col width="77" /><col width="45" /><col width="46" /><col width="42" />
      </colgroup>
      <thead>
        <tr>
          <HeadCell $grey rowSpan={3}>Punkt<br />Nr.</HeadCell>
          {["A", "B", "C", "D"].map((l) => <HeadCell key={l} $letter $on={l === "A"}>{l}</HeadCell>)}
        </tr>
        <tr>
          <HeadCell $edge="top" />
          <HeadCell colSpan={2} $edge="top">Spannung [kN/cm<Raised>2</Raised>]</HeadCell>
          <HeadCell $edge="top">Aus-</HeadCell>
        </tr>
        <tr>
          <HeadCell $edge="bottom">Spannungsart</HeadCell>
          <HeadCell $edge="bottom">vorh</HeadCell>
          <HeadCell $edge="bottom">grenz</HeadCell>
          <HeadCell $edge="bottom">nutzung</HeadCell>
        </tr>
      </thead>
      <tbody>
        {stresses.map((row, i) => (
          <tr key={i}>
            <RowHead $on={i === 0}>{i === 0 ? 1 : ""}</RowHead>
            {row.map((v, j) => <Cell key={j} $white $text={!j} $focus={!i && !j}>{v}</Cell>)}
          </tr>
        ))}
      </tbody>
    </DataTable>
    <VScroll $thumb={11}><Chevron dir="up" w={10} /><Chevron w={10} /></VScroll>
  </GridRow>
);

const Section = () => {
  const nodes = [
    [496, 130], [509, 130], [522, 130], [561, 130], [509, 147], [509, 234], [509, 320],
    [457, 338], [497, 338], [509, 338], [522, 338], [561, 338],
  ];
  const dots = [[457, 114], [561, 114], [441, 130], [441, 338], [483, 130], [483, 138], [507, 286], [512, 286]];
  const ids: [number, number, string][] = [
    [511, 128, "3"], [524, 128, "4"], [563, 128, "5"], [511, 241, "13"], [511, 327, "12"],
    [455, 345, "6"], [495, 345, "7"], [510, 345, "8"], [524, 345, "9"], [563, 345, "10"],
  ];
  return (
    <svg width="100%" height="284" viewBox="378 97 273 284" fontFamily={sans} fontSize="7">
      <defs>
        <pattern id="hatch" width="10" height="10" patternUnits="userSpaceOnUse">
          <path d="M0 0h10v10H0z" fill="#5656f2" />
          <path d="M-1 -1l12 12M-1 9l2 2M9 -1l2 2" stroke="#c4c4fc" strokeWidth="1" />
        </pattern>
      </defs>
      <path d="M457 130l15-26 26 22-1 4z" fill="#e6e3f1" stroke="#d3d0f0" strokeWidth=".7" />
      <path d="M457 130l15-26" stroke="#8f8ff2" />
      <path d="M463 331l9-19 26 20z" fill="#e8e6f7" stroke="#d3d0f0" strokeWidth=".7" />
      <path d="M516 139h41l-15 23-25-21z" fill="#fce4da" stroke="#f5c9bf" strokeWidth=".7" />
      <path d="M522 338h39l-19 32-26-21z" fill="#fce6e0" stroke="#f5c9bf" strokeWidth=".7" />
      <path
        d="M457.500 130.500h104v8h-39.500a10 10 0 0 0-10 10v173a10 10 0 0 0 10 9.500h39.500v7.500h-104V331H497a10 10 0 0 0 10-9.500v-173a10 10 0 0 0-10-10h-39.500z"
        fill="url(#hatch)"
        stroke="#3a3a70"
      />
      <path d="M504 131h18l-9 8-4 8zM504 338l5-16 5 16z" fill="#8a3fd0" opacity=".35" />
      <g stroke="#222" fill="none" strokeWidth="1">
        <path d="M457.500 130v-15.500h104V130M457 130.500h-15.500v208H457M483.500 128v27M520 145l8 9.500h18M504 286.500h21" />
      </g>
      <path d="M509.500 234.500H626" stroke="#f0f" strokeDasharray="6 2 1 2" />
      <path d="M509.500 234v118" stroke="#c425d8" strokeDasharray="4 2" strokeWidth=".8" />
      <path d="M625 232l5 2.500-5 2.500zM507 350h5l-2.500 5z" fill="#f0f" />
      {dots.map(([x, y]) => <circle key={`${x}-${y}`} cx={x + 0.5} cy={y + 0.5} r="1.500" fill="#111" />)}
      {nodes.map(([x, y]) => <rect key={`${x}-${y}`} x={x - 1} y={y - 1} width="3" height="3" fill="#11e" />)}
      <path d="M456 129h4v4h-4zM541 161h3v3h-3z" fill="#f11" />
      <path d="M471 103h3v3h-3z" fill="#11e" />
      <path d="M471 311h3v3h-3zM497 125h3v3h-3zM497 333h3v3h-3z" fill="#101080" />
      <path d="M505 132h3v3h-3zM514 140h3v3h-3zM505 340h3v3h-3zM514 348h3v3h-3zM541 369h3v3h-3z" fill="#800f0f" />
      <g fill="#10a080">{ids.map(([x, y, t]) => <text key={t} x={x} y={y} fontSize="6">{t}</text>)}</g>
      <text x="457" y="128" fill="#f11">1</text>
      <text x="466" y="103" fill="#11e" fontWeight="700">6.83</text>
      <g fill="#101080" stroke="#fffff4" strokeWidth="1.500" paintOrder="stroke">
        <text x="493" y="124">0.99</text>
        <text x="466" y="310">6.83</text>
        <text x="493" y="332">0.99</text>
      </g>
      <g fill="#801818" stroke="#fff4f0" strokeWidth="1.500" paintOrder="stroke">
        <text x="501" y="140" fill="#c23a3a">-0.93</text>
        <text x="510" y="148">-2.85</text>
        <text x="501" y="348">-0.93</text>
        <text x="510" y="356">-2.85</text>
      </g>
      <text x="536" y="169" fill="#f22">-8.69</text>
      <text x="536" y="377" fill="#801818">-8.69</text>
      <g fill="#222">
        <text x="500" y="113">150.0</text>
        <text x="530" y="153">15.0</text>
        <text x="512" y="285">7.1</text>
        <text transform="translate(439 242) rotate(-90)">300.0</text>
        <text transform="translate(481 153) rotate(-90)">10.7</text>
      </g>
      <g fill="#f0f"><text x="630" y="242">y</text><text x="511" y="361">z</text></g>
    </svg>
  );
};

const LoadView = () => (
  <svg width="70" height="170" viewBox="690 144 70 170">
    <path d="M690 148h70v74h-70z" fill="#cdcde8" />
    <path d="M690 148.500h70M690 222.500h70M729.500 148v72M757.500 148v74" stroke="#5a5a86" fill="none" />
    <path d="M727 217h5l-2.500 5z" fill="#1a1a66" />
    <path d="M690 253h70v44h-70z" fill="#8a8aec" />
    <path d="M690 252.500h70" stroke="#e22" strokeWidth="1.500" />
    <path d="M690 255.500h70M690 292.500h70M690 297.500h70" stroke="#5050a8" />
    <circle cx="730" cy="274.500" r="4" fill="none" stroke="#6a6ac8" />
    <path d="M690 274.500h70" stroke="#7a7ad8" strokeDasharray="5 2" />
  </svg>
);

export default function App() {
  return (
    <Desktop>
      <Global />
      <AppTitle><Svg name="app" size={11} />RSTAB 8.23.01 x64 - [004598-model-file, LF1]</AppTitle>
      <AppMenu>
        <Svg name="dock" size={12} />
        <MenuItems
          items={[["Datei", 0], ["Bearbeiten", 9], ["Ansicht", 0], ["Einfügen", 1], ["Berechnung", 2], ["Ergebnisse", 3],
            ["Extras", 0], ["Tabelle", 0], ["Optionen", 0], ["Zusatzmodule", 0], ["Fenster", 0], ["Hilfe", 0]]}
        />
      </AppMenu>
      <Toolbar>
        <ToolItems items={tools} />
        <CaseBox>
          <CaseSelect aria-label="Lastfall"><option>LF1</option></CaseSelect>
          <DropMark><Chevron w={6} /></DropMark>
        </CaseBox>
        <ToolItems items={toolsRight} />
      </Toolbar>
      <Strip>
        <StripTools>
          <ToolItems items={["#", "node", "dash", "member", "members", "member", "green", "faded", "|", "load"]} />
        </StripTools>
        <StripEnd><ToolItems items={["table"]} /></StripEnd>
      </Strip>
      <Work>
        <Navigator>
          <NavTitle><span>Projekt-Navigator - Daten</span><Svg name="pin" size={10} /><Svg name="close" size={10} /></NavTitle>
          <NavItem><Tick type="checkbox" defaultChecked />JOINTS - Bem</NavItem>
        </Navigator>
        <ViewColumn>
          <Viewport><LoadView /></Viewport>
          <TableTitle>1.1 Knoten</TableTitle>
        </ViewColumn>
      </Work>

      <Module aria-label="STAHL">
        <ModuleTitle>STAHL - [004598-model-file]<CloseButton aria-label="Schließen"><Svg name="close" size={14} /></CloseButton></ModuleTitle>
        <ModuleMenu><MenuItems items={[["Datei", -1], ["Bearbeiten", -1], ["Einstellungen", -1]]} /></ModuleMenu>
        <ModuleBody>
          <Side>
            <SideCombo>
              <PlainSelect aria-label="Bemessungsfall"><option>FA1 - Allgemeine Spannungsanalyse</option></PlainSelect>
              <Chevron w={10} />
            </SideCombo>
            <TreeRoot>
              <li>
                Eingabedaten
                <TreeBranch>
                  {["Basisangaben", "Materialien", "Querschnitte"].map((t) => <TreeLeaf key={t}><span>{t}</span></TreeLeaf>)}
                </TreeBranch>
              </li>
              <li>
                Ergebnisse
                <TreeBranch>
                  {["Spannungen querschnittsweise", "Spannungen stabweise", "Spannungen x-stellenweise",
                    "Maßgebende Schnittgrößen stabweise", "Stückliste stabweise"].map((t, i) => (
                    <TreeLeaf key={t} $on={!i}><span>{t}</span></TreeLeaf>
                  ))}
                </TreeBranch>
              </li>
            </TreeRoot>
            <HScroll><Chevron dir="left" w={9} /><i /><Chevron dir="right" w={9} /></HScroll>
          </Side>
          <ModuleMain>
            <BlueBar />
            <Panes>
              <Pane>
                <Columns>
                  {[29, 30, 42, 30, 34, 66, 46, 45].map((w, i) => <Column key={i} $w={w} $head={!i} />)}
                </Columns>
                <PaneTools>
                  <Spread $w={21} />
                  <Caption htmlFor="maxv" $w={17}>Max:</Caption>
                  <Field id="maxv" $w={46} defaultValue="0.37" />
                  <Field $w={17} defaultValue="≤ 1" aria-label="Grenze" />
                  <Spread $w={1} />
                  <svg width="12" height="12" viewBox="0 0 12 12">
                    <circle cx="6" cy="6" r="4" fill="#28b33a" stroke="#126a1d" strokeWidth=".6" />
                    <path d="M4 4.500h1M7 4.500h1M4 7c1 1.500 3 1.500 4 0" stroke="#063c0d" fill="none" />
                  </svg>
                  <Spread />
                  <Icon name="info" /><Icon name="levels" /><Icon name="find" marked /><Icon name="diagram" on />
                  <Spread $w={1} />
                  <Combo $w={47} $grey>
                    <PlainSelect aria-label="Filterwert"><option>&gt; 1,0</option></PlainSelect><Chevron w={10} />
                  </Combo>
                  <Icon name="filter" disabled /><Icon name="eyeRed" /><Icon name="excel" /><Icon name="pick" /><Icon name="eye" />
                </PaneTools>
              </Pane>
              <Pane $w={191}>
                <Sheet><AxisName>y</AxisName><LimitBlock><LimitRows /></LimitBlock></Sheet>
                <PaneTools>
                  <Icon name="sigma" on /><Icon name="percent" /><Icon name="values" on />
                  <Spread />
                  <Icon name="section" on /><Icon name="points" on /><Icon name="number" on /><Spread $w={1} /><Icon name="zoomX" />
                </PaneTools>
              </Pane>
            </Panes>
          </ModuleMain>
        </ModuleBody>
        <ModuleFoot>
          <Icon name="help" /><Spread $w={1} /><Icon name="back" /><Icon name="forth" />
          <Spread $w={46} />
          <TextButton $w={52} disabled>Berechnung</TextButton><Spread $w={1} />
          <TextButton $w={52}>Details...</TextButton>
          <Spread $w={113} />
          <TextButton $w={52}>Grafik</TextButton>
          <Spread />
          <TextButton $w={47}>OK</TextButton><Spread $w={1} /><TextButton $w={47}>Abbrechen</TextButton>
        </ModuleFoot>
        <StatusLine />
      </Module>

      <Dialog role="dialog" aria-label="Querschnittswerte und Spannungsverlauf">
        <DialogTitle>
          Querschnittswerte und Spannungsverlauf
          <CloseButton aria-label="Schließen"><Svg name="close" size={16} /></CloseButton>
        </DialogTitle>
        <DialogBody>
          <Groups>
            <Group>
              <GroupName>Stelle</GroupName>
              <Place>
                <Caption htmlFor="stab" $w={49}>Stab Nr.:</Caption>
                <Combo $w={44}><PlainSelect id="stab"><option>1</option></PlainSelect><Chevron w={10} /></Combo>
                <Spinner />
                <Spread $w={3} />
                <Icon name="pick" />
                <Spread $w={15} />
                <Caption htmlFor="xpos" $w={10}>x :</Caption>
                <Combo $w={44}><PlainSelect id="xpos"><option>0.000</option></PlainSelect><Chevron w={10} /></Combo>
                <Spinner />
                <Spread $w={3} />
                [m]
              </Place>
            </Group>
            <Group>
              <GroupName>Spannungspunkte</GroupName>
              <PointTable />
            </Group>
            <Group>
              <GroupName>Spannungen</GroupName>
              <StressTable />
            </Group>
          </Groups>
          <Picture>
            <Paper>
              <PaperHead>1 - IPE 300<br />Sigma gesamt<br />Stab Nr. 1, x: 0.000 m</PaperHead>
              <Section />
              <Limits><LimitRows /><span>[mm]</span></Limits>
            </Paper>
            <PictureTools>
              <Icon name="sigma" on /><Icon name="percent" /><Icon name="values" on /><Icon name="max" />
              <Spread $w={7} />
              <Joined>
                <Combo $w={20}><PlainSelect as="input" defaultValue="100" aria-label="Skalierung" /></Combo>
                <Spinner />
              </Joined>
              <span>[%]</span>
              <Spread />
              <Icon name="section" on /><Icon name="dim" on /><Icon name="axes" on /><Icon name="points" on />
              <Icon name="outline" /><Icon name="number" on />
            </PictureTools>
            <PictureTools>
              <Icon name="info" /><Icon name="eyeRed" />
              <Spread />
              <Icon name="print" /><Icon name="zoomX" />
            </PictureTools>
          </Picture>
        </DialogBody>
        <DialogFoot>
          <Icon name="help" />
          <TextButton $w={47} $primary>Abbrechen</TextButton>
        </DialogFoot>
      </Dialog>

      <Pointer width="30" height="54" viewBox="284 447 30 54" aria-hidden="true">
        <path d="M306.500 498L297 458" stroke="#c1121b" strokeWidth="2.500" />
        <path d="M294 448l-2 12 9-2z" fill="#c1121b" />
      </Pointer>
    </Desktop>
  );
}
